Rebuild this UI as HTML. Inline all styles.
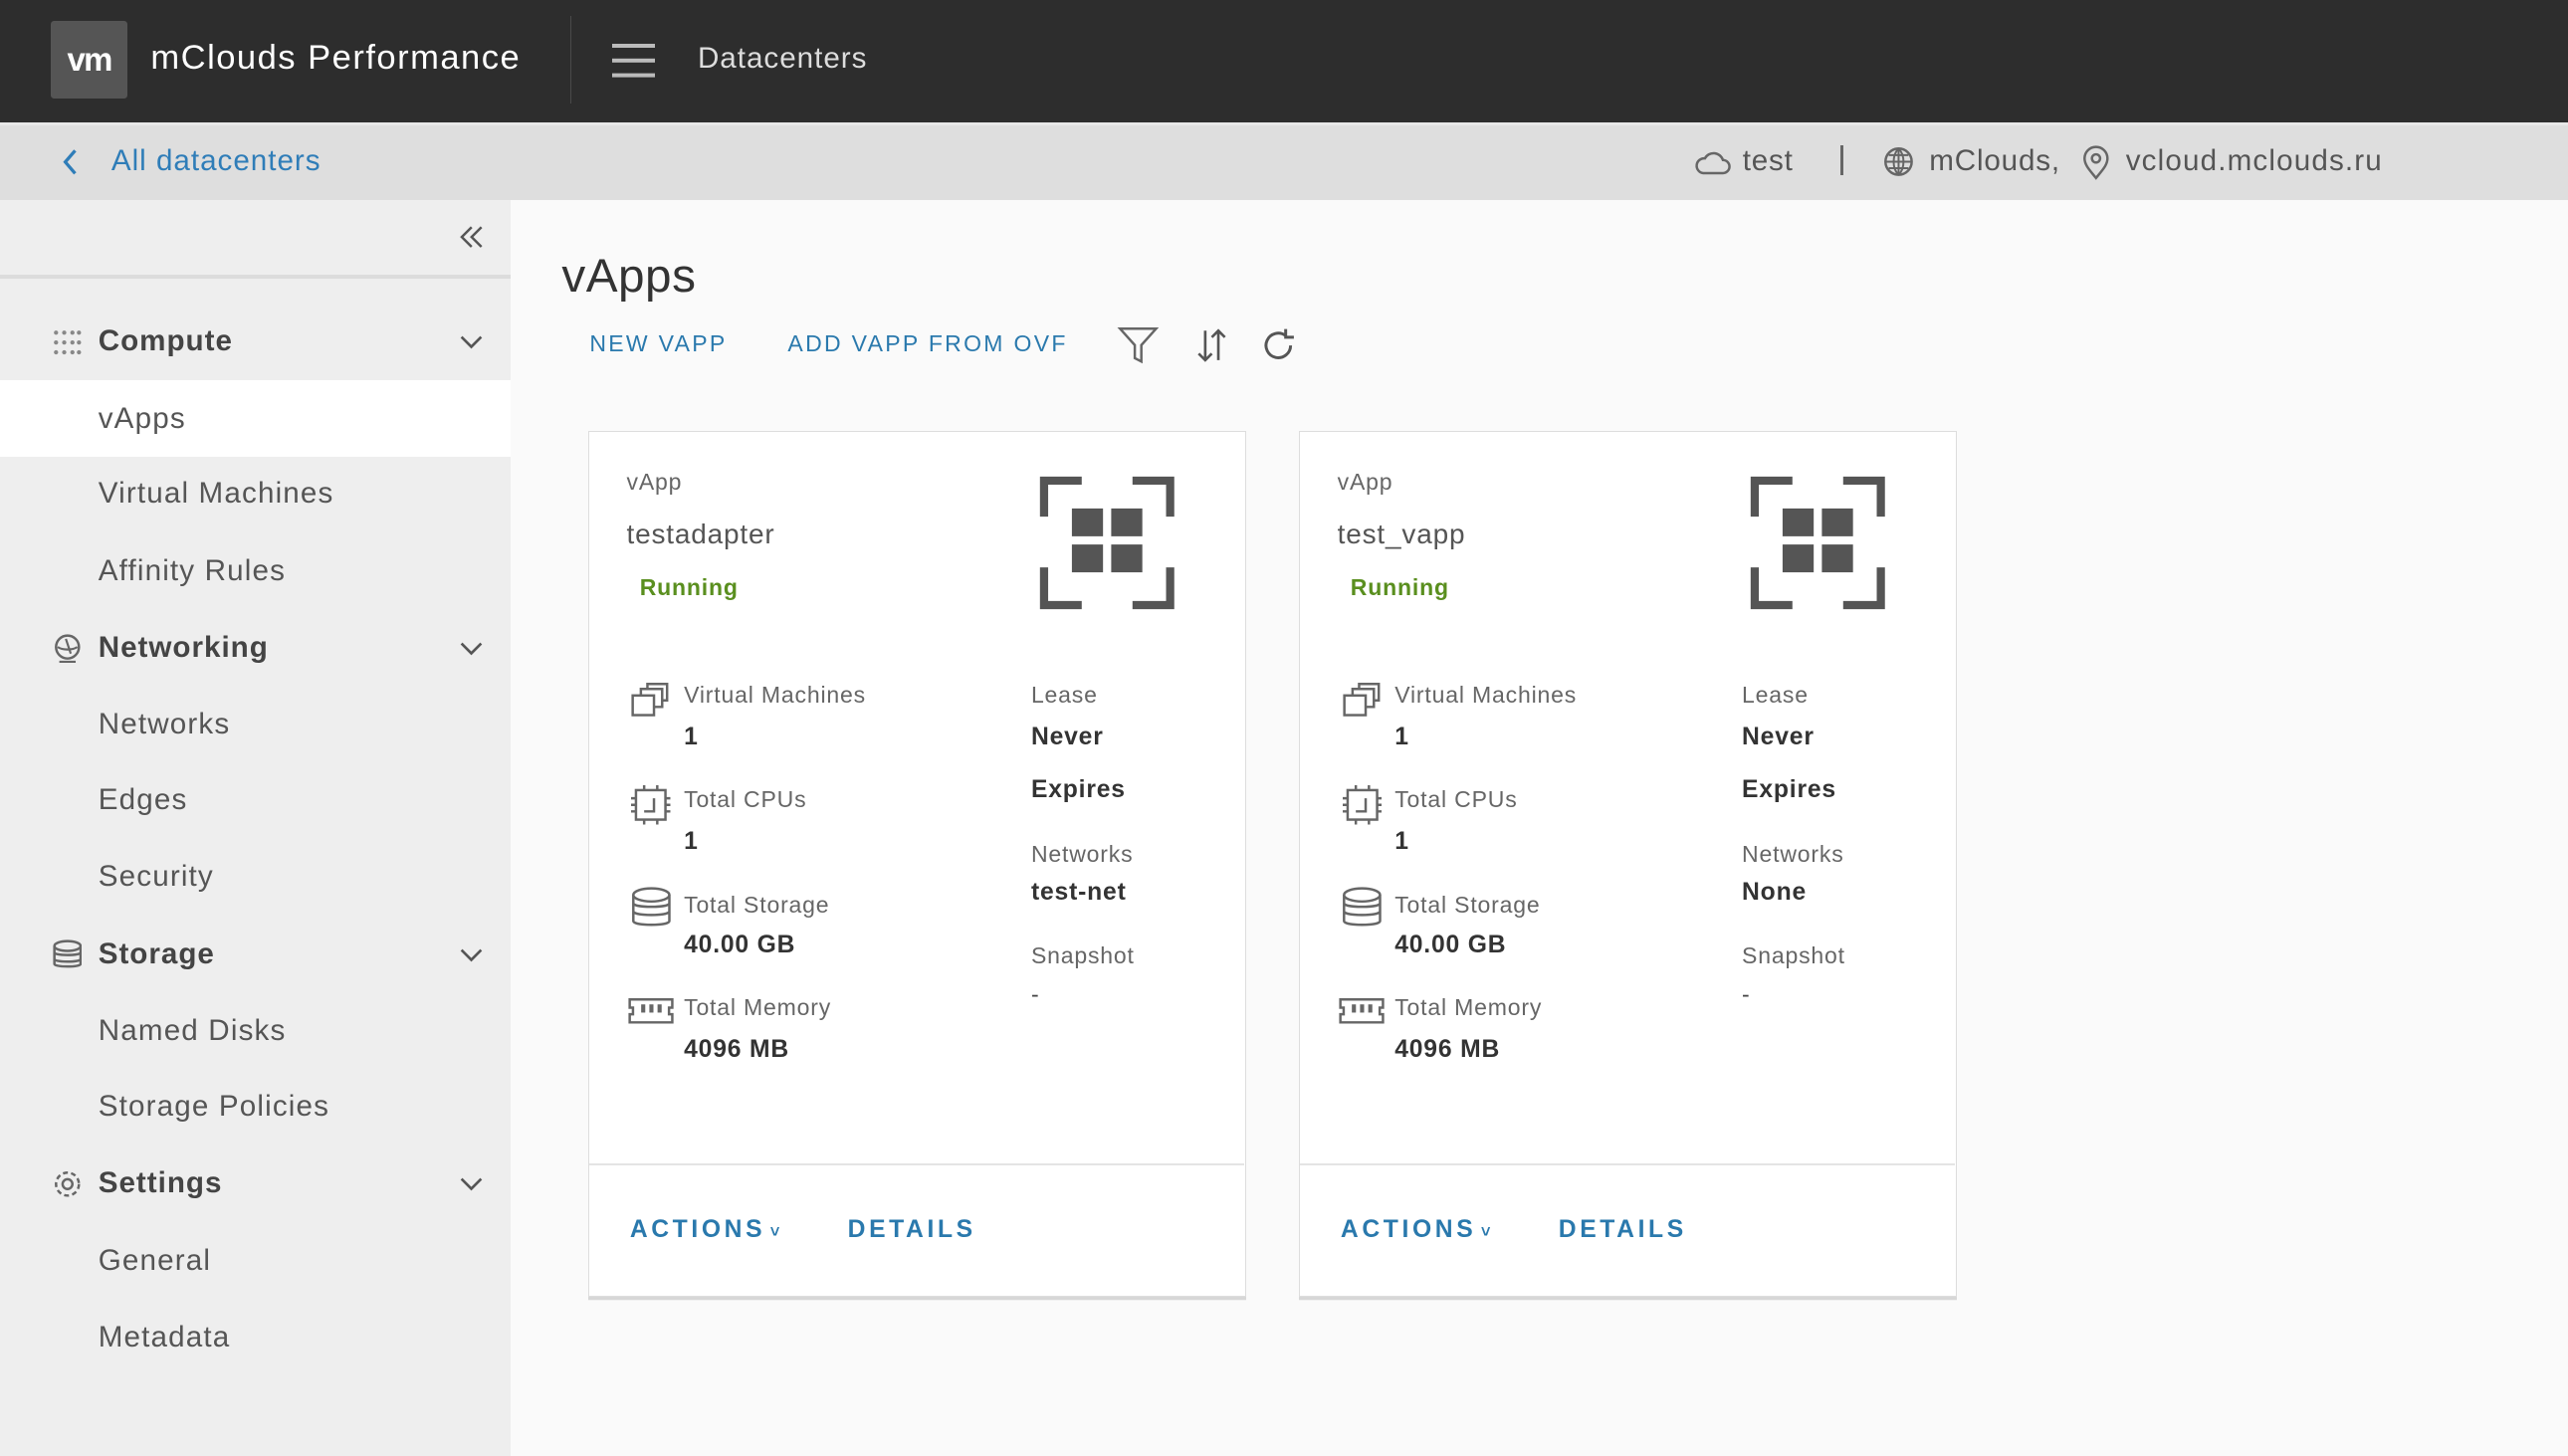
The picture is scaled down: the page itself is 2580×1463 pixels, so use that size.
<!DOCTYPE html>
<html><head><meta charset="utf-8"><style>
*{margin:0;padding:0;box-sizing:border-box}
html,body{width:2580px;height:1463px;overflow:hidden;background:#fafafa}
#w{zoom:1.6454;width:1568px;height:889px;position:relative;font-family:"Liberation Sans",sans-serif;color:#555;letter-spacing:0.5px}
.a{position:absolute;white-space:nowrap;line-height:20px}
.hd{position:absolute;left:0;top:0;width:1568px;height:75px;background:#2d2d2d}
.sub{position:absolute;left:0;top:75px;width:1568px;height:47px;background:#dedede;border-top:2px solid #e8e8e8}
.side{position:absolute;left:0;top:122px;width:312px;height:767px;background:#eeeeee}
.card{position:absolute;top:263px;width:402px;height:529px;background:#fff;border:1px solid #ddd;box-shadow:0 2px 0 #d7d7d7}
.card .a{font-size:14px}
.lbl{color:#666;font-size:14px}
.val{color:#333;font-weight:bold;font-size:15px!important}
.btn{color:#2a79ad;font-size:15px!important;letter-spacing:2.2px;font-weight:bold}
.si{font-size:18px;color:#555;left:60px;letter-spacing:0.7px}
.sh{font-size:18px;color:#444;font-weight:bold;left:60px;letter-spacing:0.6px}
.chev{position:absolute;left:281px;width:14px;height:14px}
</style></head><body><div id="w">
<div class="hd"></div>
<div class="a" style="left:31px;top:13px;width:47px;height:47px;background:#555;border-radius:2px;color:#fff;font-weight:bold;font-size:20px;line-height:47px;text-align:center;letter-spacing:-1px">vm</div>
<div class="a" style="left:92px;top:24px;font-size:21px;line-height:24px;color:#fff;letter-spacing:0.9px">mClouds Performance</div>
<div style="position:absolute;left:348px;top:10px;width:1px;height:53px;background:#4a4a4a"></div>
<div style="position:absolute;left:374px;top:27px;width:26px;height:2px;background:#bbb;box-shadow:0 9px 0 #bbb,0 18px 0 #bbb"></div>
<div class="a" style="left:426px;top:26px;font-size:18px;color:#ddd;letter-spacing:0.6px">Datacenters</div>
<div class="sub"></div>
<svg style="position:absolute;left:36px;top:90px" width="14" height="18"><path d="M10 2L4 9l6 7" fill="none" stroke="#2f7db8" stroke-width="2"/></svg>
<div class="a" style="left:68px;top:89px;font-size:18px;color:#2f7db8;letter-spacing:0.6px">All datacenters</div>
<svg style="position:absolute;left:1035px;top:89px" width="22" height="20"><path d="M5 17h12a4 4 0 0 0 0-8 6 6 0 0 0-11-1 4.5 4.5 0 0 0-1 9z" fill="none" stroke="#666" stroke-width="1.5"/></svg>
<div class="a" style="left:1064px;top:89px;font-size:18px;color:#555">test</div>
<div style="position:absolute;left:1124px;top:89px;width:1.5px;height:18px;background:#666"></div>
<svg style="position:absolute;left:1149px;top:89px" width="20" height="20"><circle cx="10" cy="10" r="8" fill="none" stroke="#666" stroke-width="1.5"/><path d="M2 10h16M10 2v16M4 6h12M4 14h12M10 2c-4 4-4 12 0 16M10 2c4 4 4 12 0 16" fill="none" stroke="#666" stroke-width="1.2"/></svg>
<div class="a" style="left:1178px;top:89px;font-size:18px;color:#555">mClouds,</div>
<svg style="position:absolute;left:1271px;top:89px" width="18" height="22"><path d="M9 20c-4-5-7-8-7-12a7 7 0 0 1 14 0c0 4-3 7-7 12z" fill="none" stroke="#666" stroke-width="1.5"/><circle cx="9" cy="8" r="2.5" fill="none" stroke="#666" stroke-width="1.5"/></svg>
<div class="a" style="left:1298px;top:89px;font-size:18px;color:#555;letter-spacing:0.7px">vcloud.mclouds.ru</div>

<div class="side"></div>
<div style="position:absolute;left:0;top:168px;width:312px;height:2px;background:#dcdcdc"></div>
<svg style="position:absolute;left:279px;top:137px" width="18" height="16"><path d="M9 2L3 8l6 6M15 2L9 8l6 6" fill="none" stroke="#555" stroke-width="1.5"/></svg>
<div style="position:absolute;left:0;top:232px;width:312px;height:47px;background:#fff"></div>
<svg style="position:absolute;left:32px;top:201px" width="18" height="16"><g fill="#888"><circle cx="2" cy="2" r="1.3"/><circle cx="7" cy="2" r="1.3"/><circle cx="12" cy="2" r="1.3"/><circle cx="16" cy="2" r="1.3"/><circle cx="2" cy="8" r="1.3"/><circle cx="7" cy="8" r="1.3"/><circle cx="12" cy="8" r="1.3"/><circle cx="16" cy="8" r="1.3"/><circle cx="2" cy="14" r="1.3"/><circle cx="7" cy="14" r="1.3"/><circle cx="12" cy="14" r="1.3"/><circle cx="16" cy="14" r="1.3"/></g></svg>
<div class="a sh" style="top:199px">Compute</div>
<div class="a si" style="top:246px">vApps</div>
<div class="a si" style="top:292px">Virtual Machines</div>
<div class="a si" style="top:339px">Affinity Rules</div>
<svg style="position:absolute;left:32px;top:387px" width="18" height="18"><circle cx="9" cy="8" r="7" fill="none" stroke="#666" stroke-width="1.5"/><path d="M3 8c3 2 9 2 12 0M8 3l3 9M4 17h10" fill="none" stroke="#666" stroke-width="1.3"/></svg>
<div class="a sh" style="top:386px">Networking</div>
<div class="a si" style="top:433px">Networks</div>
<div class="a si" style="top:479px">Edges</div>
<div class="a si" style="top:526px">Security</div>
<svg style="position:absolute;left:32px;top:574px" width="18" height="18"><g fill="none" stroke="#666" stroke-width="1.5"><ellipse cx="9" cy="4" rx="8" ry="3"/><path d="M1 4v11c0 2 16 2 16 0V4M1 8c0 2 16 2 16 0M1 12c0 2 16 2 16 0"/></g></svg>
<div class="a sh" style="top:573px">Storage</div>
<div class="a si" style="top:620px">Named Disks</div>
<div class="a si" style="top:666px">Storage Policies</div>
<svg style="position:absolute;left:32px;top:714px" width="18" height="18"><circle cx="9" cy="9" r="3" fill="none" stroke="#666" stroke-width="1.5"/><circle cx="9" cy="9" r="7" fill="none" stroke="#666" stroke-width="1.5" stroke-dasharray="3 2"/></svg>
<div class="a sh" style="top:713px">Settings</div>
<div class="a si" style="top:760px">General</div>
<div class="a si" style="top:807px">Metadata</div>
<svg class="chev" style="top:202px"><path d="M1 4l6 6 6-6" fill="none" stroke="#555" stroke-width="1.6"/></svg>
<svg class="chev" style="top:389px"><path d="M1 4l6 6 6-6" fill="none" stroke="#555" stroke-width="1.6"/></svg>
<svg class="chev" style="top:576px"><path d="M1 4l6 6 6-6" fill="none" stroke="#555" stroke-width="1.6"/></svg>
<svg class="chev" style="top:716px"><path d="M1 4l6 6 6-6" fill="none" stroke="#555" stroke-width="1.6"/></svg>

<div class="a" style="left:343px;top:151px;font-size:29px;line-height:36px;color:#333;letter-spacing:0.3px">vApps</div>
<div class="a" style="left:360px;top:200px;font-size:14px;color:#2a79ad;letter-spacing:1.4px">NEW VAPP</div>
<div class="a" style="left:481px;top:200px;font-size:14px;color:#2a79ad;letter-spacing:1.4px">ADD VAPP FROM OVF</div>
<svg style="position:absolute;left:682px;top:199px" width="26" height="24"><path d="M2 2h22l-9 10v10l-4-2V12z" fill="none" stroke="#666" stroke-width="1.5"/></svg>
<svg style="position:absolute;left:730px;top:200px" width="20" height="22"><path d="M6 2v18M2 16l4 4 4-4M14 20V2M10 6l4-4 4 4" fill="none" stroke="#555" stroke-width="1.6"/></svg>
<svg style="position:absolute;left:770px;top:200px" width="22" height="22"><path d="M18 11a7.5 7.5 0 1 1-3-6M15 1v5h5" fill="none" stroke="#555" stroke-width="1.8"/></svg>

<!-- card 1 -->
<div class="card" style="left:359px">
 <div class="a lbl" style="left:23px;top:21px">vApp</div>
 <div class="a" style="left:23px;top:53px;font-size:17px;color:#555">testadapter</div>
 <div class="a" style="left:31px;top:85px;font-size:14px;color:#5a8f1f;font-weight:bold">Running</div>
 <svg style="position:absolute;left:275px;top:27px" width="83" height="82"><g fill="none" stroke="#555" stroke-width="5"><path d="M26 3H3v22M57 3h23v22M3 56v23h23M80 56v23H57"/></g><g fill="#555"><rect x="20" y="20" width="19" height="17"/><rect x="44" y="20" width="19" height="17"/><rect x="20" y="42" width="19" height="17"/><rect x="44" y="42" width="19" height="17"/></g></svg>
 <svg style="position:absolute;left:26px;top:152px" width="24" height="24"><g fill="none" stroke="#666" stroke-width="1.5"><rect x="1" y="9" width="13" height="12"/><path d="M6 9V5h13v11h-5M10 5V2h12v10h-3"/></g></svg>
 <div class="a lbl" style="left:58px;top:151px">Virtual Machines</div>
 <div class="a val" style="left:58px;top:177px">1</div>
 <svg style="position:absolute;left:26px;top:216px" width="24" height="24"><g fill="none" stroke="#666" stroke-width="1.5"><rect x="3" y="3" width="18" height="18"/><path d="M14 8v8H8M0 8h3M0 12h3M0 16h3M21 8h3M21 12h3M21 16h3M8 0v3M16 0v3M8 21v3M16 21v3"/></g></svg>
 <div class="a lbl" style="left:58px;top:215px">Total CPUs</div>
 <div class="a val" style="left:58px;top:241px">1</div>
 <svg style="position:absolute;left:25px;top:278px" width="26" height="26"><g fill="none" stroke="#666" stroke-width="1.5"><ellipse cx="13" cy="5" rx="11" ry="4"/><path d="M2 5v16c0 3 22 3 22 0V5M2 10c0 3 22 3 22 0M2 15c0 3 22 3 22 0"/></g></svg>
 <div class="a lbl" style="left:58px;top:279px">Total Storage</div>
 <div class="a val" style="left:58px;top:304px">40.00 GB</div>
 <svg style="position:absolute;left:24px;top:345px" width="28" height="18"><g fill="none" stroke="#666" stroke-width="1.5"><path d="M1 2h26v5h-2v4h2v5H1v-5h2V7H1z"/></g><g fill="#666"><rect x="8" y="5" width="2.5" height="5"/><rect x="13" y="5" width="2.5" height="5"/><rect x="18" y="5" width="2.5" height="5"/></g></svg>
 <div class="a lbl" style="left:58px;top:342px">Total Memory</div>
 <div class="a val" style="left:58px;top:368px">4096 MB</div>
 <div class="a lbl" style="left:270px;top:151px">Lease</div>
 <div class="a val" style="left:270px;top:177px">Never</div>
 <div class="a val" style="left:270px;top:209px">Expires</div>
 <div class="a lbl" style="left:270px;top:248px">Networks</div>
 <div class="a val" style="left:270px;top:272px">test-net</div>
 <div class="a lbl" style="left:270px;top:310px">Snapshot</div>
 <div class="a" style="left:270px;top:334px;color:#444">-</div>
 <div style="position:absolute;left:0;top:447px;width:400px;height:1px;background:#e4e4e4"></div>
 <div class="a btn" style="left:25px;top:478px">ACTIONS<span style="font-size:10px;letter-spacing:0"> ˅</span></div>
 <div class="a btn" style="left:158px;top:478px">DETAILS</div>
</div>
<!-- card 2 -->
<div class="card" style="left:793px">
 <div class="a lbl" style="left:23px;top:21px">vApp</div>
 <div class="a" style="left:23px;top:53px;font-size:17px;color:#555">test_vapp</div>
 <div class="a" style="left:31px;top:85px;font-size:14px;color:#5a8f1f;font-weight:bold">Running</div>
 <svg style="position:absolute;left:275px;top:27px" width="83" height="82"><g fill="none" stroke="#555" stroke-width="5"><path d="M26 3H3v22M57 3h23v22M3 56v23h23M80 56v23H57"/></g><g fill="#555"><rect x="20" y="20" width="19" height="17"/><rect x="44" y="20" width="19" height="17"/><rect x="20" y="42" width="19" height="17"/><rect x="44" y="42" width="19" height="17"/></g></svg>
 <svg style="position:absolute;left:26px;top:152px" width="24" height="24"><g fill="none" stroke="#666" stroke-width="1.5"><rect x="1" y="9" width="13" height="12"/><path d="M6 9V5h13v11h-5M10 5V2h12v10h-3"/></g></svg>
 <div class="a lbl" style="left:58px;top:151px">Virtual Machines</div>
 <div class="a val" style="left:58px;top:177px">1</div>
 <svg style="position:absolute;left:26px;top:216px" width="24" height="24"><g fill="none" stroke="#666" stroke-width="1.5"><rect x="3" y="3" width="18" height="18"/><path d="M14 8v8H8M0 8h3M0 12h3M0 16h3M21 8h3M21 12h3M21 16h3M8 0v3M16 0v3M8 21v3M16 21v3"/></g></svg>
 <div class="a lbl" style="left:58px;top:215px">Total CPUs</div>
 <div class="a val" style="left:58px;top:241px">1</div>
 <svg style="position:absolute;left:25px;top:278px" width="26" height="26"><g fill="none" stroke="#666" stroke-width="1.5"><ellipse cx="13" cy="5" rx="11" ry="4"/><path d="M2 5v16c0 3 22 3 22 0V5M2 10c0 3 22 3 22 0M2 15c0 3 22 3 22 0"/></g></svg>
 <div class="a lbl" style="left:58px;top:279px">Total Storage</div>
 <div class="a val" style="left:58px;top:304px">40.00 GB</div>
 <svg style="position:absolute;left:24px;top:345px" width="28" height="18"><g fill="none" stroke="#666" stroke-width="1.5"><path d="M1 2h26v5h-2v4h2v5H1v-5h2V7H1z"/></g><g fill="#666"><rect x="8" y="5" width="2.5" height="5"/><rect x="13" y="5" width="2.5" height="5"/><rect x="18" y="5" width="2.5" height="5"/></g></svg>
 <div class="a lbl" style="left:58px;top:342px">Total Memory</div>
 <div class="a val" style="left:58px;top:368px">4096 MB</div>
 <div class="a lbl" style="left:270px;top:151px">Lease</div>
 <div class="a val" style="left:270px;top:177px">Never</div>
 <div class="a val" style="left:270px;top:209px">Expires</div>
 <div class="a lbl" style="left:270px;top:248px">Networks</div>
 <div class="a val" style="left:270px;top:272px">None</div>
 <div class="a lbl" style="left:270px;top:310px">Snapshot</div>
 <div class="a" style="left:270px;top:334px;color:#444">-</div>
 <div style="position:absolute;left:0;top:447px;width:400px;height:1px;background:#e4e4e4"></div>
 <div class="a btn" style="left:25px;top:478px">ACTIONS<span style="font-size:10px;letter-spacing:0"> ˅</span></div>
 <div class="a btn" style="left:158px;top:478px">DETAILS</div>
</div>
</div></body></html>
